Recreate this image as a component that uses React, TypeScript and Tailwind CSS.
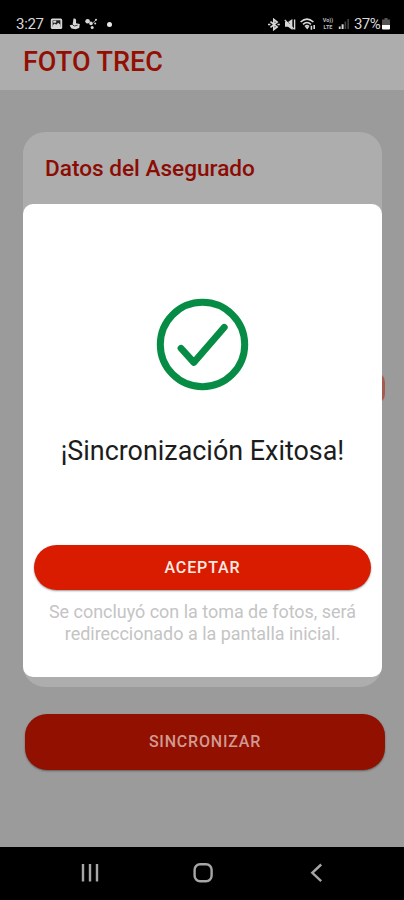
import React, { useState } from 'react';

function StatusBar() {
  return (
    <div className="flex h-[34px] shrink-0 items-end justify-between bg-black pr-[14px] pb-[1px] pl-4 text-[#d8d8d8]">
      <div className="flex items-center">
        <span className="w-[29px] text-[15px] leading-[18px] tracking-[-0.3px] whitespace-nowrap">3:27</span>
        {/* Notification icons */}
        <svg className="ml-[5px] h-3 w-[13px]" viewBox="0 0 13 12">
          <rect x="0.8" y="0.5" width="11.4" height="10.5" rx="1.5" fill="currentColor" />
          <rect x="2.6" y="2.3" width="7.8" height="6.6" fill="#222" />
          <path d="M2.6 9V7.4l2-1.8 1.6 1.2 2-2 2.2 2V9z" fill="currentColor" />
          <rect x="3.2" y="2.7" width="3" height="2" fill="currentColor" />
        </svg>
        <svg className="ml-1.5 h-3 w-3" viewBox="0 0 12 12" fill="currentColor">
          <path d="M4.5.5a2 2 0 0 1 2.6 2L7 5.2l3.8.8-.6 4L6.5 11.3 2.5 10.6.6 7.5 3.6 6.6 4 4z" />
          <path d="M2.6 5.8L5.2 8l3.4-.8" fill="none" stroke="#111" strokeWidth="0.8" />
        </svg>
        <svg className="ml-1 h-3 w-[13px]" viewBox="0 0 13 12" fill="currentColor">
          <circle cx="2.6" cy="3.2" r="2.3" />
          <circle cx="6" cy="5.4" r="1.8" />
          <circle cx="11" cy="1.8" r="1" />
          <circle cx="7.2" cy="9.6" r="1.5" />
          <circle cx="10.2" cy="5.4" r="1" />
          <path d="M8.2 4.6l2.8-2.8" stroke="currentColor" strokeWidth="0.9" />
        </svg>
        <span className="ml-[9px] h-[5px] w-[5px] rounded-full bg-[#e8e8e8]" />
      </div>

      <div className="flex items-center">
        {/* Bluetooth */}
        <svg className="h-[13px] w-3" viewBox="0 0 12 13" fill="none" stroke="currentColor" strokeWidth="1.7">
          <path d="M2.5 3.7l6.6 5.2-3.3 2.6V1.5l3.3 2.6-6.6 5.2" />
          <path d="M0 6.5h2.4M9.4 6.5h2.4" />
        </svg>
        {/* Muted speaker */}
        <svg className="ml-[4px] h-[13px] w-3" viewBox="0 0 12 13">
          <path d="M1 4h3L8.4 1v11L4 8.8H1z" fill="currentColor" />
          <path d="M.5 1l5 5" stroke="#000" strokeWidth="1" />
          <path d="M.8 2l9 9" stroke="currentColor" strokeWidth="1.3" />
          <path d="M10.6 1.5v10" stroke="currentColor" strokeWidth="1.4" />
        </svg>
        {/* Wifi */}
        <svg className="ml-[4px] h-[13px] w-4" viewBox="0 0 16 13" fill="none" stroke="currentColor" strokeWidth="1.6">
          <path d="M.6 4Q7-1.8 13.4 4M3 6.3q4-3.6 8 0M5 8.5q2-1.8 4 0" />
          <path d="M4.8 8.6h4.6L7.2 11.4z" fill="currentColor" stroke="none" />
          <path d="M11.4 7.8v4M14.2 7v4" strokeWidth="1.6" />
        </svg>
        <span className="ml-[5px] w-[14px] text-center text-[5.5px] leading-[7px] font-bold whitespace-nowrap text-[#bdbdbd]">
          Vo))
          <br />
          LTE
        </span>
        {/* Signal */}
        <svg className="ml-[3px] h-3 w-3" viewBox="0 0 12 12" fill="currentColor">
          <rect x="0.8" y="8.5" width="1.8" height="2.5" />
          <rect x="3.6" y="6.3" width="2" height="4.7" />
          <rect x="6.6" y="3.5" width="1.6" height="7.5" opacity=".3" />
          <rect x="9.4" y="1" width="1.6" height="10" opacity=".3" />
        </svg>
        <span className="ml-[4px] w-[27px] text-[15px] leading-[18px] tracking-[-0.6px] whitespace-nowrap">37%</span>
        {/* Battery */}
        <svg className="ml-[1px] h-3 w-2" viewBox="0 0 8 12">
          <path d="M2.5 0h3v1.5H8V7H0V1.5h2.5z" fill="#555" />
          <path d="M0 7h8v3.5q0 1-1 1H1q-1 0-1-1z" fill="#fff" />
        </svg>
      </div>
    </div>
  );
}

function NavigationBar() {
  return (
    <nav className="flex h-[53px] shrink-0 items-center bg-black pb-0.5 pl-20 text-[#a6a6a6]">
      <svg className="h-5 w-5" viewBox="0 0 20 20" fill="none" stroke="currentColor" strokeWidth="2.4">
        <path d="M3 1v17.5M10 1v17.5M17 1v17.5" />
      </svg>
      <svg className="ml-[93px] h-5 w-5" viewBox="0 0 20 20" fill="none" stroke="currentColor" strokeWidth="2.4">
        <rect x="1.6" y="1.3" width="17" height="17" rx="5.5" />
      </svg>
      <svg className="ml-[94px] h-5 w-5" viewBox="0 0 20 20" fill="none" stroke="currentColor" strokeWidth="2.4">
        <path d="M14.2 1.5L5.3 9.8l8.9 8.4" />
      </svg>
    </nav>
  );
}

function SuccessDialog({ onAccept }: { onAccept: () => void }) {
  return (
    <div role="dialog" className="absolute top-[204px] left-[23px] flex h-[473px] w-[359px] flex-col items-center rounded-[10px] bg-white">
      <svg className="mt-[94px] h-[93px] w-[93px]" viewBox="0 0 93 93" fill="none" stroke="#078c45">
        <circle cx="46.5" cy="46.5" r="42.2" strokeWidth="7" />
        <path d="M25 50.3L37.8 64.4 68.3 29.3" strokeWidth="6.8" strokeLinecap="round" strokeLinejoin="round" />
      </svg>
      <h2 className="mt-[43px] text-[26.9px] leading-[34px] whitespace-nowrap text-[#1c1c1c]">¡Sincronización Exitosa!</h2>
      <button
        onClick={onAccept}
        className="mt-[77px] h-[45px] w-[337px] rounded-full bg-[#d91c00] text-[16px] font-medium tracking-[0.9px] text-[#fbe9e4] shadow-[0_1px_2px_rgba(0,0,0,0.4)]"
      >
        ACEPTAR
      </button>
      <p className="mt-[11px] text-center text-[17.95px] leading-[22px] whitespace-nowrap text-[#c4c4c4]">
        Se concluyó con la toma de fotos, será
        <br />
        redireccionado a la pantalla inicial.
      </p>
    </div>
  );
}

export default function App() {
  const [open, setOpen] = useState<boolean>(true);

  return (
    <div className="relative flex h-[900px] w-[404px] flex-col overflow-hidden bg-[#9b9b9b] font-['Roboto',sans-serif]">
      <StatusBar />
      <header className="flex h-14 shrink-0 items-center bg-[#adadad] pl-[23px]">
        <h1 className="text-[27px] leading-8 font-medium whitespace-nowrap text-[#940f03]">FOTO TREC</h1>
      </header>

      <main className="flex flex-1 flex-col pt-[42px] pl-[23px]">
        <section className="relative h-[555px] w-[359px] rounded-[22px] bg-[#adadad] pt-[23px] pl-[22px]">
          <h2 className="text-[22.6px] leading-7 font-medium whitespace-nowrap text-[#8c0c04]">Datos del Asegurado</h2>
          {/* Edge of the floating button behind the dialog */}
          <span className="absolute top-[240px] right-[-3px] h-[32px] w-8 rounded-[10px] bg-[#a55a50]" />
        </section>
        <button
          onClick={() => setOpen(true)}
          className="mt-[27px] ml-[2px] h-[56px] w-[360px] rounded-[22px] bg-[#921000] text-[16px] font-medium tracking-[0.8px] text-[#cf9a92] shadow-[0_1px_2px_rgba(0,0,0,0.4)]"
        >
          SINCRONIZAR
        </button>
      </main>

      <NavigationBar />
      {open && <SuccessDialog onAccept={() => setOpen(false)} />}
    </div>
  );
}
